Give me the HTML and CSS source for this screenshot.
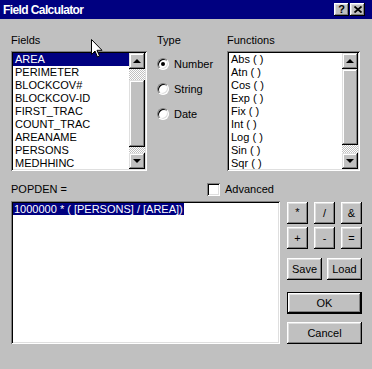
FILE: index.html
```html
<!DOCTYPE html>
<html lang="en">
<head>
    <meta charset="UTF-8">
    <title>Field Calculator</title>
    <link rel="stylesheet" href="styles.css">
</head>
<body>
    <div class="window">
        <div class="titlebar">
            <span class="title">Field Calculator</span>
            <div class="caption-buttons">
                <span class="cap-btn">?</span>
                <span class="cap-btn">
                    <svg width="8" height="7" viewBox="0 0 8 7"><path d="M0.5 0.5 L7.5 6.5 M7.5 0.5 L0.5 6.5" stroke="#000" stroke-width="1.8" fill="none"/></svg>
                </span>
            </div>
        </div>

        <div class="dialog">
            <div class="top">
                <div class="col-fields">
                    <div class="label">Fields</div>
                    <div class="listbox">
                        <div class="items">
                            <div class="item selected">AREA</div>
                            <div class="item">PERIMETER</div>
                            <div class="item">BLOCKCOV#</div>
                            <div class="item">BLOCKCOV-ID</div>
                            <div class="item">FIRST_TRAC</div>
                            <div class="item">COUNT_TRAC</div>
                            <div class="item">AREANAME</div>
                            <div class="item">PERSONS</div>
                            <div class="item">MEDHHINC</div>
                        </div>
                        <div class="scrollbar">
                            <div class="sb-btn"><span class="arrow-up"></span></div>
                            <div class="sb-track">
                                <div class="thumb fields-thumb"></div>
                            </div>
                            <div class="sb-btn"><span class="arrow-down"></span></div>
                        </div>
                    </div>
                </div>

                <div class="col-type">
                    <div class="label">Type</div>
                    <div class="radio-row"><span class="radio checked"></span>Number</div>
                    <div class="radio-row"><span class="radio"></span>String</div>
                    <div class="radio-row"><span class="radio"></span>Date</div>
                </div>

                <div class="col-func">
                    <div class="label">Functions</div>
                    <div class="listbox">
                        <div class="items">
                            <div class="item">Abs ( )</div>
                            <div class="item">Atn ( )</div>
                            <div class="item">Cos ( )</div>
                            <div class="item">Exp ( )</div>
                            <div class="item">Fix ( )</div>
                            <div class="item">Int ( )</div>
                            <div class="item">Log ( )</div>
                            <div class="item">Sin ( )</div>
                            <div class="item">Sqr ( )</div>
                        </div>
                        <div class="scrollbar">
                            <div class="sb-btn"><span class="arrow-up"></span></div>
                            <div class="sb-track">
                                <div class="thumb func-thumb"></div>
                            </div>
                            <div class="sb-btn"><span class="arrow-down"></span></div>
                        </div>
                    </div>
                </div>
            </div>

            <div class="bottom">
                <div class="expr-col">
                    <div class="expr-head">
                        <span class="expr-name">POPDEN =</span>
                        <span class="check"><span class="checkbox"></span>Advanced</span>
                    </div>
                    <div class="expr-box">
                        <span class="expr-text">1000000 * ( [PERSONS] / [AREA])</span>
                    </div>
                </div>

                <div class="buttons">
                    <div class="op-grid">
                        <div class="btn op-star">*</div>
                        <div class="btn">/</div>
                        <div class="btn">&amp;</div>
                        <div class="btn">+</div>
                        <div class="btn">-</div>
                        <div class="btn">=</div>
                    </div>
                    <div class="file-row">
                        <div class="btn">Save</div>
                        <div class="btn">Load</div>
                    </div>
                    <div class="btn default ok">OK</div>
                    <div class="btn cancel">Cancel</div>
                </div>
            </div>
        </div>

        <!-- mouse pointer -->
        <svg class="pointer" width="12" height="19" viewBox="0 0 12 19">
            <path d="M0.5 0.5 L0.5 15.5 L4 12 L6.5 18 L8.5 17 L6 11.3 L11 11.3 Z" fill="#fff" stroke="#000" stroke-width="1"/>
        </svg>
    </div>
</body>
</html>
```

FILE: styles.css
```css
body {
    margin: 0;
    padding: 0;
    background-color: #c0c0c0;
    font-family: "Liberation Sans", Arial, sans-serif;
    font-size: 11px;
    color: #000;
}

.window {
    position: relative;
    width: 372px;
    height: 369px;
    overflow: hidden;
}

/* title bar */
.titlebar {
    height: 19px;
    background-color: #000080;
    display: flex;
    justify-content: space-between;
    align-items: flex-start;
}

.title {
    color: #fff;
    font-weight: bold;
    font-size: 12px;
    line-height: 14px;
    padding: 3px 0 0 3px;
    letter-spacing: -0.6px;
}

.caption-buttons {
    display: flex;
    gap: 1px;
    padding: 3px 7px 0 0;
}

.cap-btn {
    box-sizing: border-box;
    width: 15px;
    height: 13px;
    background-color: #c0c0c0;
    box-shadow: inset -1px -1px #000, inset 1px 1px #fff, inset -2px -2px #808080, inset 2px 2px #dfdfdf;
    display: flex;
    align-items: center;
    justify-content: center;
    font-weight: bold;
    font-size: 11px;
    line-height: 13px;
}

/* dialog body */
.dialog {
    padding: 14px 0 0 11px;
}

.top {
    display: flex;
}

.col-fields {
    width: 136px;
}

.col-type {
    width: 60px;
    margin-left: 10px;
}

.col-func {
    width: 133px;
    margin-left: 10px;
}

.label {
    line-height: 14px;
    margin-bottom: 4px;
}

.listbox {
    box-sizing: border-box;
    height: 120px;
    padding: 2px;
    display: flex;
    background-color: #fff;
    box-shadow: inset 1px 1px #808080, inset -1px -1px #fff, inset 2px 2px #000, inset -2px -2px #dfdfdf;
}

.items {
    flex: 1;
    overflow: hidden;
}

.item {
    line-height: 13px;
    padding-left: 2px;
    white-space: nowrap;
}

.item.selected {
    background-color: #000080;
    color: #fff;
}

/* scrollbars */
.scrollbar {
    width: 16px;
    display: flex;
    flex-direction: column;
    background: repeating-conic-gradient(#fff 0 25%, #c0c0c0 0 50%) 0 0 / 2px 2px;
}

.sb-btn {
    box-sizing: border-box;
    height: 16px;
    flex: none;
    background-color: #c0c0c0;
    box-shadow: inset -1px -1px #000, inset 1px 1px #dfdfdf, inset -2px -2px #808080, inset 2px 2px #fff;
    display: flex;
    align-items: center;
    justify-content: center;
}

.arrow-up {
    width: 0;
    height: 0;
    border-left: 4px solid transparent;
    border-right: 4px solid transparent;
    border-bottom: 4px solid #000;
}

.arrow-down {
    width: 0;
    height: 0;
    border-left: 4px solid transparent;
    border-right: 4px solid transparent;
    border-top: 4px solid #000;
}

.sb-track {
    flex: 1;
}

.thumb {
    box-sizing: border-box;
    background-color: #c0c0c0;
    box-shadow: inset -1px -1px #000, inset 1px 1px #dfdfdf, inset -2px -2px #808080, inset 2px 2px #fff;
}

.fields-thumb {
    margin-top: 11px;
    height: 67px;
}

.func-thumb {
    height: 76px;
}

/* type radios */
.radio-row {
    height: 25px;
    display: flex;
    align-items: center;
}

.radio {
    position: relative;
    box-sizing: border-box;
    width: 12px;
    height: 12px;
    margin-right: 5px;
    border-radius: 50%;
    background-color: #fff;
    border: 1px solid;
    border-color: #808080 #fff #fff #808080;
    box-shadow: inset 1px 1px #000, inset -1px -1px #dfdfdf;
}

.radio.checked::after {
    content: "";
    position: absolute;
    left: 3px;
    top: 3px;
    width: 4px;
    height: 4px;
    border-radius: 50%;
    background-color: #000;
}

/* expression area */
.bottom {
    display: flex;
    margin-top: 11px;
}

.expr-col {
    width: 269px;
}

.expr-head {
    display: flex;
    align-items: center;
    height: 14px;
    margin-bottom: 5px;
}

.expr-name {
    width: 196px;
}

.check {
    display: flex;
    align-items: center;
}

.checkbox {
    box-sizing: border-box;
    width: 13px;
    height: 13px;
    margin-right: 5px;
    background-color: #fff;
    box-shadow: inset 1px 1px #808080, inset -1px -1px #fff, inset 2px 2px #000, inset -2px -2px #dfdfdf;
}

.expr-box {
    box-sizing: border-box;
    height: 143px;
    padding: 2px;
    background-color: #fff;
    box-shadow: inset 1px 1px #808080, inset -1px -1px #fff, inset 2px 2px #000, inset -2px -2px #dfdfdf;
}

.expr-text {
    display: inline-block;
    background-color: #000080;
    color: #fff;
    line-height: 12px;
    padding: 0 1px;
}

/* buttons */
.buttons {
    width: 75px;
    margin-left: 7px;
    padding-top: 20px;
    display: flex;
    flex-direction: column;
}

.btn {
    box-sizing: border-box;
    height: 22px;
    background-color: #c0c0c0;
    box-shadow: inset -1px -1px #000, inset 1px 1px #fff, inset -2px -2px #808080, inset 2px 2px #dfdfdf;
    display: flex;
    align-items: center;
    justify-content: center;
}

.op-grid {
    display: grid;
    grid-template-columns: repeat(3, 1fr);
    column-gap: 6px;
    row-gap: 3px;
}

.op-star {
    align-items: flex-start;
    padding-top: 4px;
}

.file-row {
    display: flex;
    gap: 5px;
    margin-top: 9px;
}

.file-row .btn {
    flex: 1;
}

.btn.default {
    border: 1px solid #000;
}

.ok {
    margin-top: 12px;
}

.cancel {
    margin-top: 8px;
}

.pointer {
    position: absolute;
    left: 91px;
    top: 39px;
}
```
